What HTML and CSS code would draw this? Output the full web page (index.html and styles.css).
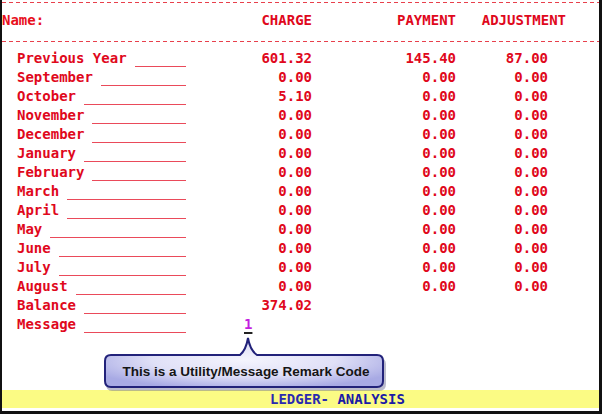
FILE: index.html
```html
<!DOCTYPE html>
<html>
<head>
<meta charset="utf-8">
<link rel="stylesheet" href="styles.css">
</head>
<body>
<div class="screen">
  <div class="dash"></div>
  <div class="head">
    <span class="c1">Name:</span>
    <span class="c2">CHARGE</span>
    <span class="c3">PAYMENT</span>
    <span class="c4">ADJUSTMENT</span>
  </div>
  <div class="dash"></div>
  <div class="rows">
    <div class="lbl"><span>Previous Year</span><i></i></div><div class="num">601.32</div><div class="num">145.40</div><div class="num">87.00</div>
    <div class="lbl"><span>September</span><i></i></div><div class="num">0.00</div><div class="num">0.00</div><div class="num">0.00</div>
    <div class="lbl"><span>October</span><i></i></div><div class="num">5.10</div><div class="num">0.00</div><div class="num">0.00</div>
    <div class="lbl"><span>November</span><i></i></div><div class="num">0.00</div><div class="num">0.00</div><div class="num">0.00</div>
    <div class="lbl"><span>December</span><i></i></div><div class="num">0.00</div><div class="num">0.00</div><div class="num">0.00</div>
    <div class="lbl"><span>January</span><i></i></div><div class="num">0.00</div><div class="num">0.00</div><div class="num">0.00</div>
    <div class="lbl"><span>February</span><i></i></div><div class="num">0.00</div><div class="num">0.00</div><div class="num">0.00</div>
    <div class="lbl"><span>March</span><i></i></div><div class="num">0.00</div><div class="num">0.00</div><div class="num">0.00</div>
    <div class="lbl"><span>April</span><i></i></div><div class="num">0.00</div><div class="num">0.00</div><div class="num">0.00</div>
    <div class="lbl"><span>May</span><i></i></div><div class="num">0.00</div><div class="num">0.00</div><div class="num">0.00</div>
    <div class="lbl"><span>June</span><i></i></div><div class="num">0.00</div><div class="num">0.00</div><div class="num">0.00</div>
    <div class="lbl"><span>July</span><i></i></div><div class="num">0.00</div><div class="num">0.00</div><div class="num">0.00</div>
    <div class="lbl"><span>August</span><i></i></div><div class="num">0.00</div><div class="num">0.00</div><div class="num">0.00</div>
    <div class="lbl"><span>Balance</span><i></i></div><div class="num">374.02</div><div></div><div></div>
    <div class="lbl"><span>Message</span><i></i></div><div class="code"><span>1</span></div><div></div><div></div>
  </div>
  <div class="callout">
    <svg class="bubble" width="290" height="66" viewBox="100 334 290 66">
      <defs>
        <radialGradient id="g" cx="50%" cy="45%" r="60%">
          <stop offset="0" stop-color="#f4f4fd"/>
          <stop offset="0.55" stop-color="#e0e0f7"/>
          <stop offset="1" stop-color="#a8aae4"/>
        </radialGradient>
      </defs>
      <path d="M112,358 H241 Q247,352 248,339 Q251,352 258,358 H379 Q386,358 386,364 V384 Q386,391 379,391 H112 Q106,391 106,384 V364 Q106,358 112,358 Z" fill="#6a6a90" opacity="0.45"/>
      <path d="M111,355 H240 Q246,350 248,338 Q250,350 257,355 H377 Q383,355 383,361 V381 Q383,387 377,387 H111 Q105,387 105,381 V361 Q105,355 111,355 Z" fill="url(#g)" stroke="#22227a" stroke-width="2"/>
    </svg>
    <div class="tip">This is a Utility/Message Remark Code</div>
  </div>
  <div class="bar"><span class="thin">LEDGER-</span> ANALYSIS</div>
</div>
</body>
</html>
```
FILE: styles.css
```css
html, body {
  margin: 0;
  padding: 0;
  background: #fff;
}
.screen {
  position: relative;
  width: 602px;
  height: 414px;
  box-sizing: border-box;
  border-left: 2px solid #111;
  border-right: 3px solid #111;
  border-bottom: 3px solid #111;
  display: flex;
  flex-direction: column;
  font-family: "DejaVu Sans Mono", "Liberation Mono", monospace;
  font-weight: bold;
  font-size: 14px;
  color: #e0081c;
  overflow: hidden;
}
.dash {
  height: 1px;
  background: repeating-linear-gradient(90deg, #e8404c 0 4px, transparent 4px 7px);
}
.screen > .dash:first-child {
  margin-top: 2px;
}
.head {
  display: grid;
  grid-template-columns: 310px 144px 110px;
  padding: 8px 0 11px 0;
  line-height: 19px;
  position: relative;
}
.head .c1 {
  grid-column: 1;
  grid-row: 1;
  color: #e8101c;
}
.head .c2 {
  grid-column: 1;
  grid-row: 1;
  text-align: right;
}
.head .c3 {
  grid-column: 2;
  text-align: right;
}
.head .c4 {
  grid-column: 3;
  text-align: right;
}
.rows {
  margin-top: 7px;
  display: grid;
  grid-template-columns: 184px 126px 144px 92px;
  grid-auto-rows: 19px;
  line-height: 19px;
}
.lbl {
  display: flex;
  padding-left: 15px;
}
.lbl i {
  flex: 1;
  height: 1px;
  background: #ea4a5a;
  align-self: flex-end;
  margin: 0 0 1px 8px;
}
.num {
  text-align: right;
}
.code {
  padding-left: 58px;
  color: #c41ee0;
}
.code span {
  text-decoration: underline;
  text-decoration-color: #222;
  text-decoration-thickness: 2px;
  text-underline-offset: 3px;
}
.callout {
  position: absolute;
  left: 98px;
  top: 334px;
  width: 290px;
  height: 66px;
}
.bubble {
  position: absolute;
  left: 0;
  top: 0;
}
.tip {
  position: absolute;
  left: 7px;
  top: 21px;
  width: 278px;
  height: 32px;
  display: flex;
  align-items: center;
  justify-content: center;
  font-family: "Liberation Sans", Arial, sans-serif;
  font-weight: bold;
  font-size: 13.5px;
  color: #151515;
}
.bar {
  margin-top: auto;
  margin-bottom: 3px;
  height: 18px;
  line-height: 18px;
  background: #fbfb84;
  padding-left: 268px;
  color: #1a1aa6;
  white-space: pre;
}
.bar .thin {
  color: #2a2ab0;
}
```
